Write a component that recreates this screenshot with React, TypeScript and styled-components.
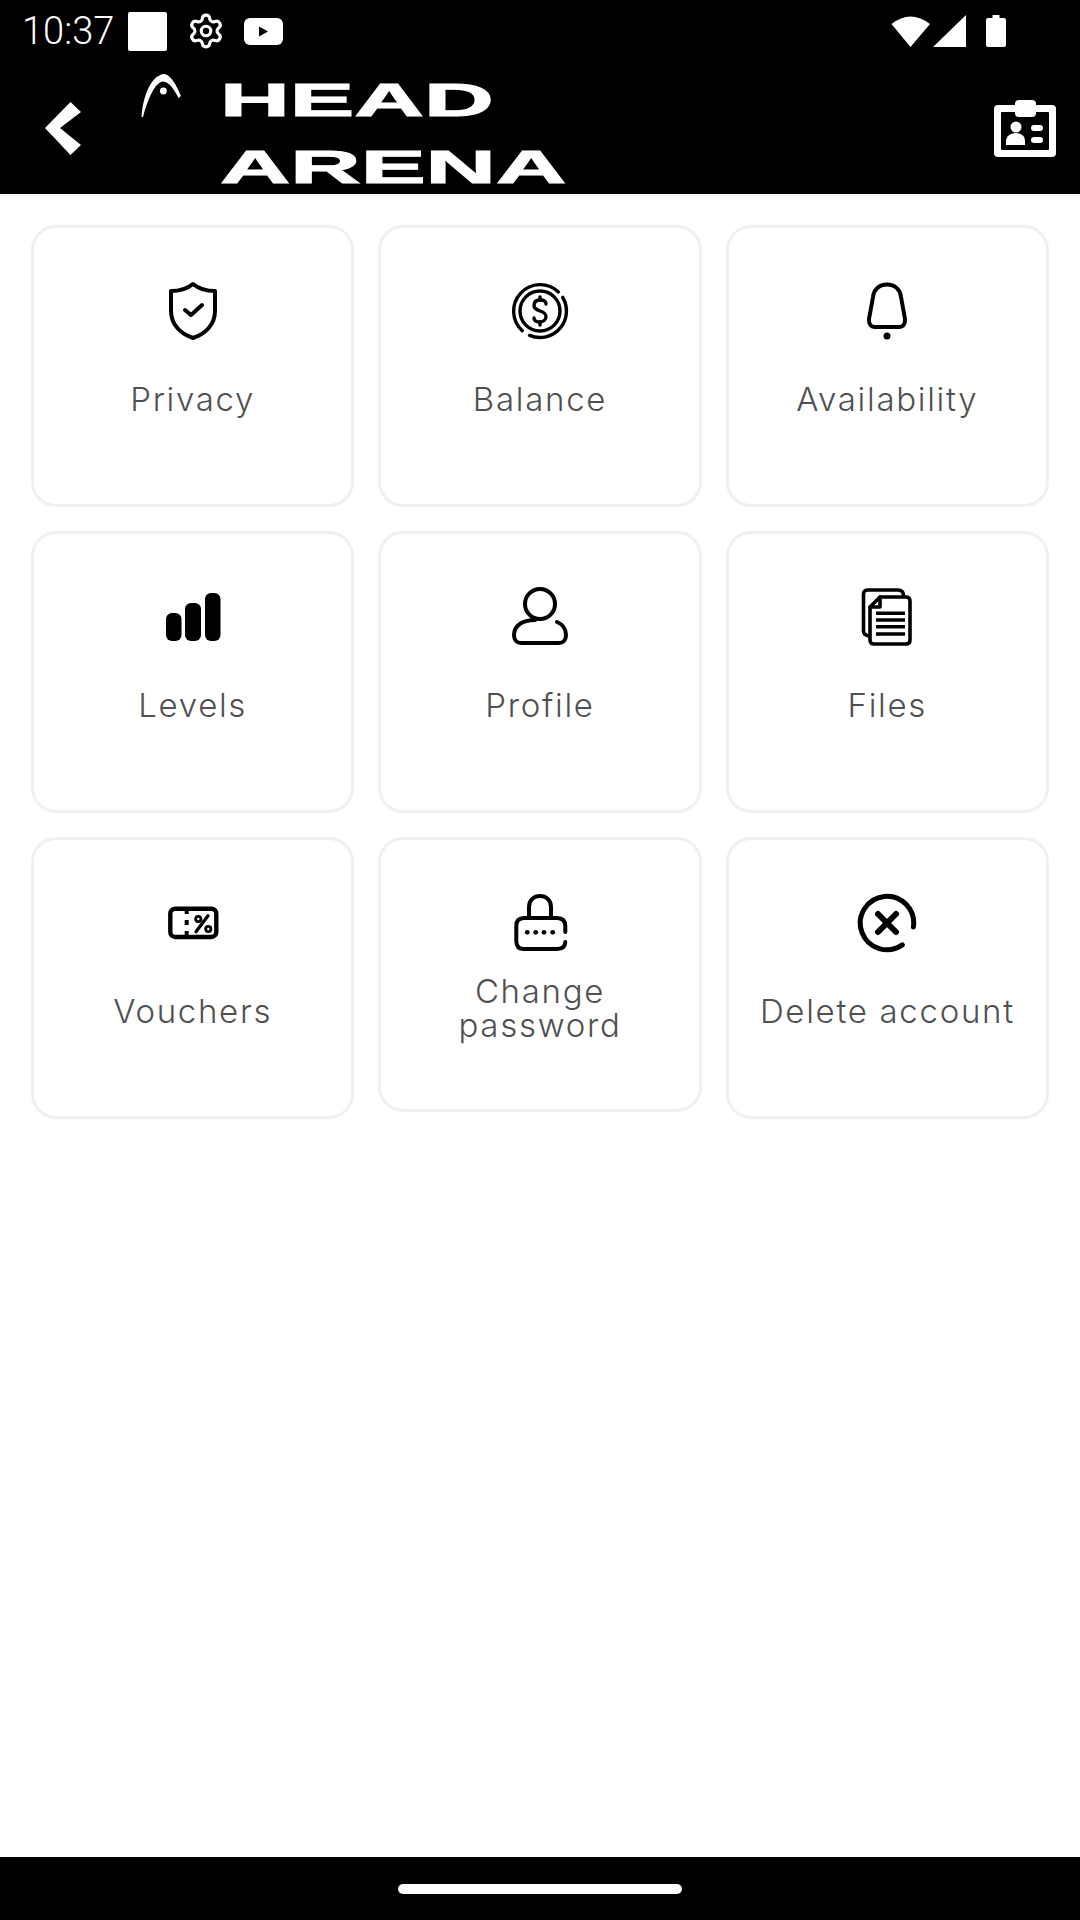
import * as React from 'react';
import styled, { createGlobalStyle } from 'styled-components';
import { Settings } from 'lucide-react';

const GlobalStyle = createGlobalStyle`
  html, body {
    margin: 0;
    padding: 0;
    background: #fff;
  }
  * {
    box-sizing: border-box;
  }
`;

const Page = styled.div`
  width: 1080px;
  height: 1920px;
  display: flex;
  flex-direction: column;
  background: #fff;
`;

const StatusBar = styled.div`
  height: 62px;
  flex: none;
  display: flex;
  align-items: center;
  padding: 0 74px 0 22px;
  background: #000;
  color: #fff;
`;

const Clock = styled.span`
  width: 106px;
  font-family: Roboto, sans-serif;
  font-size: 38px;
  font-weight: 300;
  line-height: 62px;
`;

const NoticeSquare = styled.span`
  width: 39px;
  height: 39px;
  margin-right: 20px;
  border-radius: 2px;
  background: #fff;
`;

const VideoBadge = styled.svg`
  margin-left: 19px;
`;

const StatusRight = styled.div`
  margin-left: auto;
  display: flex;
  align-items: center;
`;

const BatteryIcon = styled.svg`
  margin-left: 19px;
`;

const Toolbar = styled.header`
  height: 132px;
  flex: none;
  display: flex;
  align-items: center;
  padding: 0 24px 0 45px;
  background: #000;
  box-shadow: 0 3px 5px rgba(0, 0, 0, 0.05);
`;

const BackIcon = styled.svg`
  flex: none;
`;

const LogoMark = styled.svg`
  flex: none;
  align-self: flex-start;
  margin: 11px 0 0 60px;
`;

const Wordmark = styled.div`
  flex: none;
  align-self: flex-start;
  display: flex;
  flex-direction: column;
  gap: 21px;
  margin: 15px 0 0 39px;
`;

const WordLine = styled.span<{ $stretch: number }>`
  display: block;
  height: 46px;
  font-family: 'Liberation Sans', sans-serif;
  font-size: 46px;
  font-weight: 700;
  line-height: 46px;
  color: #fff;
  white-space: nowrap;
  -webkit-text-stroke: 1px #fff;
  transform: scaleX(${props => props.$stretch});
  transform-origin: left center;
`;

const BadgeIcon = styled.svg`
  flex: none;
  margin-left: auto;
`;

const Grid = styled.main`
  flex: 1;
  display: grid;
  grid-template-columns: repeat(3, 1fr);
  grid-auto-rows: 282px;
  align-content: start;
  column-gap: 24px;
  row-gap: 24px;
  padding: 31px 31px 0;
`;

const Card = styled.div<{ $wrapped?: boolean }>`
  height: ${props => (props.$wrapped ? 275 : 282)}px;
  display: flex;
  flex-direction: column;
  align-items: center;
  padding: 51px 4px 0;
  border: 3px solid #f0f0f0;
  border-radius: 25px;
  background: #fff;
`;

const IconBox = styled.svg`
  flex: none;
  width: 64px;
  height: 64px;
  fill: none;
  stroke: #000;
  stroke-width: 4;
  stroke-linecap: round;
  stroke-linejoin: round;
`;

const Label = styled.div<{ $wrapped?: boolean }>`
  margin-top: ${props => (props.$wrapped ? 19 : 39)}px;
  font-family: Inter, sans-serif;
  font-size: 33px;
  font-weight: 300;
  line-height: 34px;
  letter-spacing: 1.7px;
  text-align: center;
  white-space: nowrap;
  color: #505050;
`;

const BottomBar = styled.div`
  height: 63px;
  flex: none;
  display: flex;
  align-items: center;
  justify-content: center;
  background: #000;
`;

const HomePill = styled.span`
  width: 284px;
  height: 10px;
  border-radius: 5px;
  background: #fff;
`;

const ShieldIcon = () => (
  <IconBox viewBox="0 0 64 64">
    <path d="M32 5C38 10 46 12 54 12V32C54 46 44 55 32 59C20 55 10 46 10 32V12C18 12 26 10 32 5Z" />
    <path d="M24 31L30 36L41 26" />
  </IconBox>
);

const CoinIcon = () => (
  <IconBox viewBox="0 0 64 64">
    <g strokeWidth="3.4">
      <path d="M54.7 18.4A26.5 26.5 0 0 1 21.6 56.4" />
      <path d="M14.3 51.7A26.5 26.5 0 1 1 50.4 12.9" />
      <circle cx="32" cy="32" r="20" />
      <path d="M38 25C38 22 35 21 32 21C28 21 26 23 26 26.5C26 30 29 31 32 32C35 33 38 34 38 37.5C38 41 35 43 32 43C29 43 26 42 26 39" />
      <path d="M32 18V21M32 43V46" />
    </g>
  </IconBox>
);

const BellIcon = () => (
  <IconBox viewBox="0 0 64 64">
    <path d="M32 5.5C24 5.5 18.5 11 18 18L14 40C13.5 45 16 48 20 48H44C48 48 50.5 45 50 40L46 18C45.5 11 40 5.5 32 5.5Z" />
    <circle cx="32" cy="57" r="3.5" fill="#000" stroke="none" />
  </IconBox>
);

const BarsIcon = () => (
  <IconBox viewBox="0 0 64 64">
    <g fill="#000" stroke="none">
      <rect x="5" y="28" width="15.5" height="28" rx="6" />
      <rect x="24" y="18" width="16" height="38" rx="6" />
      <rect x="44" y="8" width="15.5" height="48" rx="6" />
    </g>
  </IconBox>
);

const PersonIcon = () => (
  <IconBox viewBox="0 0 64 64">
    <circle cx="32" cy="19" r="15" />
    <path d="M27 35C14 35 6 41 6 50C6 55 9 58 13 58H51C55 58 58 55 58 50C58 44 54 39 49 37" />
  </IconBox>
);

const FilesIcon = () => (
  <IconBox viewBox="0 0 64 64">
    <g strokeWidth="3.6">
      <path d="M14 51Q8.5 50 8.5 46V9Q8.5 5 13 5H43Q48 5 48.5 10" />
      <path d="M25 12H51Q55 12 55 16V55Q55 59 51 59H19Q15 59 15 55V22Z" />
      <path d="M25 12V22H15" />
      <path d="M21 28.3H50M21 35H50M21 41.7H50M21 49H50" strokeLinecap="butt" />
    </g>
  </IconBox>
);

const VoucherIcon = () => (
  <IconBox viewBox="0 0 64 64">
    <rect x="9.3" y="17.7" width="46" height="28.3" rx="5" strokeWidth="4.4" />
    <path d="M25.7 19V23M25.7 29V34M25.7 40V45" strokeLinecap="butt" />
    <circle cx="37.3" cy="28" r="2.6" strokeWidth="2.8" />
    <circle cx="47.3" cy="38" r="2.6" strokeWidth="2.8" />
    <path d="M47 24.7L35 40.7" strokeWidth="3.2" />
  </IconBox>
);

const LockIcon = () => (
  <IconBox viewBox="0 0 64 64">
    <path d="M21 25V16C21 9 26 5 32 5C38 5 43 9 43 16V25" />
    <path d="M57.3 41V35Q57.3 27 49 27H16Q8.3 27 8.3 35V50Q8.3 58 16 58H49Q57 58 57.3 51" />
    <g fill="#000" stroke="none">
      <circle cx="19.3" cy="41.3" r="2.4" />
      <circle cx="27.7" cy="41.3" r="2.4" />
      <circle cx="36" cy="41.3" r="2.4" />
      <circle cx="44.7" cy="41.3" r="2.4" />
    </g>
  </IconBox>
);

const CrossIcon = () => (
  <IconBox viewBox="0 0 64 64">
    <path d="M47.3 53.9A26.7 26.7 0 1 1 58.4 36" strokeWidth="5" />
    <path d="M23 23L41 41M41 23L23 41" strokeWidth="6" />
  </IconBox>
);

const items = [
  { label: 'Privacy', icon: <ShieldIcon /> },
  { label: 'Balance', icon: <CoinIcon /> },
  { label: 'Availability', icon: <BellIcon /> },
  { label: 'Levels', icon: <BarsIcon /> },
  { label: 'Profile', icon: <PersonIcon /> },
  { label: 'Files', icon: <FilesIcon /> },
  { label: 'Vouchers', icon: <VoucherIcon /> },
  { label: 'Change password', icon: <LockIcon />, wrapped: true },
  { label: 'Delete account', icon: <CrossIcon /> },
];

function App() {
  return (
    <Page>
      <GlobalStyle />
      <StatusBar>
        <Clock>10:37</Clock>
        <NoticeSquare />
        <Settings size={38} strokeWidth={2} color="#fff" />
        <VideoBadge width="39" height="27" viewBox="0 0 39 27">
          <rect width="39" height="27" rx="6" fill="#fff" />
          <path d="M15 8.5L24 13.5L15 18.5Z" fill="#000" />
        </VideoBadge>
        <StatusRight>
          <svg width="40" height="32" viewBox="0 0 40 32">
            <path d="M0.5 9Q19.5 -6 39 9L19.5 32Z" fill="#fff" />
          </svg>
          <svg width="36" height="32" viewBox="0 0 36 32">
            <path d="M2 32L35 0V32Z" fill="#fff" />
          </svg>
          <BatteryIcon width="20" height="32" viewBox="0 0 20 32">
            <path d="M6.5 0H13.5V3H18Q20 3 20 5V30Q20 32 18 32H2Q0 32 0 30V5Q0 3 2 3H6.5Z" fill="#fff" />
          </BatteryIcon>
        </StatusRight>
      </StatusBar>
      <Toolbar>
        <BackIcon width="36" height="53" viewBox="0 0 36 53">
          <path d="M0 26L25.5 0L36 10L15 26L36 43L25.5 53Z" fill="#fff" />
        </BackIcon>
        <LogoMark width="40" height="44" viewBox="0 0 40 44">
          <path d="M0.5 44C2 24 9 4 22 1C29 0 36 13 40 23L37.5 25C33 16 28 9 22 8.5C14 9 7 26 2 44Z" fill="#fff" />
          <circle cx="22.4" cy="18" r="3.4" fill="#fff" />
        </LogoMark>
        <Wordmark>
          <WordLine $stretch={2.1}>HEAD</WordLine>
          <WordLine $stretch={2.117}>ARENA</WordLine>
        </Wordmark>
        <BadgeIcon width="62" height="57" viewBox="0 0 62 57">
          <rect y="5" width="62" height="52" rx="4" fill="#fff" />
          <rect x="7" y="12" width="48" height="38" rx="1" fill="#000" />
          <rect x="21" width="21" height="17" rx="4" fill="#fff" />
          <circle cx="22" cy="27" r="5.5" fill="#fff" />
          <path d="M12 45V41C12 36 17 33 22 33C27 33 31 36 31 41V45Z" fill="#fff" />
          <rect x="37" y="25" width="12" height="6" rx="3" fill="#fff" />
          <rect x="37" y="37" width="12" height="6" rx="3" fill="#fff" />
        </BadgeIcon>
      </Toolbar>
      <Grid>
        {items.map(item => (
          <Card key={item.label} $wrapped={item.wrapped}>
            {item.icon}
            <Label $wrapped={item.wrapped}>
              {item.wrapped ? (
                <>
                  Change
                  <br />
                  password
                </>
              ) : (
                item.label
              )}
            </Label>
          </Card>
        ))}
      </Grid>
      <BottomBar>
        <HomePill />
      </BottomBar>
    </Page>
  );
}

export default App;
